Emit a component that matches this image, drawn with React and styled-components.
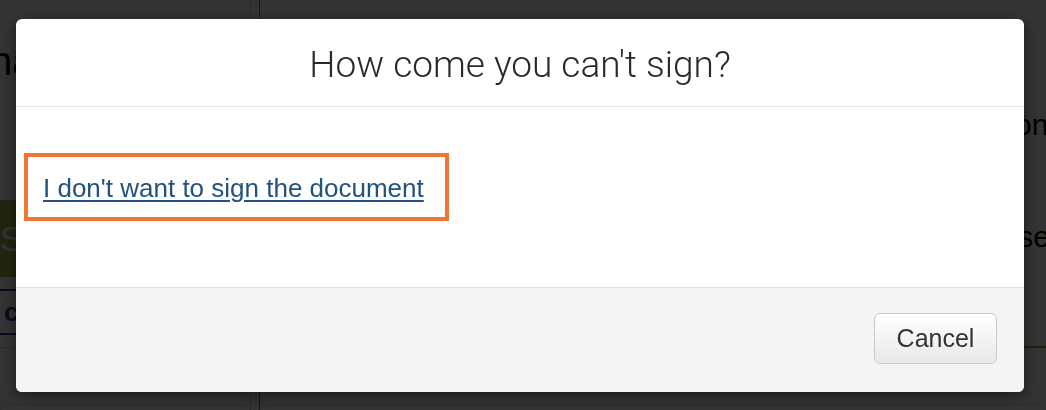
import React from 'react'
import styled, { createGlobalStyle } from 'styled-components'

const Global = createGlobalStyle`
  html, body {
    margin: 0;
    padding: 0;
    background: #fff;
    font-family: "Liberation Sans", Arial, sans-serif;
  }
  body { overflow: hidden; }
`

export default function App() {
  return (
    <>
      <Global />
      <Page>
        <LeftCol>
          <NameText>name</NameText>
          <SignButton>Sign</SignButton>
          <Tabs>
            <Tab>cancel</Tab>
          </Tabs>
          <Rule />
          <Panel />
        </LeftCol>
        <RightCol>
          <SideText $top={108} $shift={-24}>Electronic</SideText>
          <SideText $top={78} $shift={-4}>Please</SideText>
          <GreenRule />
          <Panel />
        </RightCol>
      </Page>
      <Backdrop />
      <Modal>
        <Header>
          <Title>How come you can't sign?</Title>
        </Header>
        <Body>
          <Highlight>
            <Link href="#">I don't want to sign the document</Link>
          </Highlight>
        </Body>
        <Footer>
          <Button type="button">Cancel</Button>
        </Footer>
      </Modal>
    </>
  )
}

const Page = styled.div`
  display: flex;
  height: 410px;
  overflow: hidden;
`

const LeftCol = styled.div`
  width: 250px;
  border-right: 1px solid #d8d8d8;
  display: flex;
  flex-direction: column;
  overflow: hidden;
`

const NameText = styled.div`
  margin: 38px 0 0 -10px;
  font-size: 40px;
  line-height: 46px;
  color: #000;
`

const SignButton = styled.div`
  margin-top: 116px;
  height: 77px;
  background: #a6b84a;
  color: #fff;
  font-size: 35px;
  line-height: 77px;
`

const Tabs = styled.div`
  margin-top: 12px;
  border-top: 2px solid #203f80;
  border-bottom: 2px solid #203f80;
  height: 42px;
`

const Tab = styled.div`
  padding-left: 4px;
  font-size: 26px;
  font-weight: 700;
  line-height: 42px;
  color: #203f80;
`

const Rule = styled.div`
  margin-top: 12px;
  border-top: 1px solid #cfcfcf;
`

const Panel = styled.div`
  margin-top: auto;
  height: 5px;
  border: 1px solid #dcdcdc;
  border-bottom: none;
  border-radius: 6px 6px 0 0;
`

const RightCol = styled.div`
  flex: 1;
  margin-left: 8px;
  border-left: 1px solid #7d8c30;
  display: flex;
  flex-direction: column;
  overflow: hidden;
`

const SideText = styled.div`
  margin-top: ${p => p.$top}px;
  margin-right: ${p => p.$shift}px;
  text-align: right;
  white-space: nowrap;
  font-size: 30px;
  line-height: 34px;
  color: #000;
`

const GreenRule = styled.div`
  margin-top: 92px;
  border-top: 2px solid #8ca632;
`

const Backdrop = styled.div`
  position: fixed;
  inset: 0;
  background: rgba(0, 0, 0, 0.8);
`

const Modal = styled.div`
  position: fixed;
  top: 19px;
  left: 16px;
  width: 1008px;
  background: #fff;
  border-radius: 6px;
  overflow: hidden;
  box-shadow: 0 4px 14px rgba(0, 0, 0, 0.5);
`

const Header = styled.div`
  padding: 28px 0 24px;
  border-bottom: 1px solid #e5e5e5;
  text-align: center;
`

const Title = styled.h3`
  margin: 0;
  font-family: Roboto, "Liberation Sans", sans-serif;
  font-size: 37px;
  line-height: 35px;
  font-weight: 300;
  color: #2a2a2a;
`

const Body = styled.div`
  padding: 46px 0 66px 8px;
  border-bottom: 1px solid #dedede;
`

const Highlight = styled.div`
  display: inline-block;
  border: 4px solid #ef7733;
  padding: 16px 21px 14px 15px;
`

const Link = styled.a`
  display: block;
  font-size: 26px;
  line-height: 30px;
  color: #22527f;
  text-decoration: underline;
  text-decoration-thickness: 2px;
  text-underline-offset: 3px;
`

const Footer = styled.div`
  display: flex;
  justify-content: flex-end;
  padding: 25px 27px 28px;
  background: #f4f4f4;
`

const Button = styled.button`
  width: 123px;
  height: 51px;
  border: 1px solid #c8c8c8;
  border-radius: 6px;
  background: linear-gradient(#ffffff, #e8e8e8);
  font-family: "Liberation Sans", Arial, sans-serif;
  font-size: 25px;
  color: #333;
  cursor: pointer;
`
